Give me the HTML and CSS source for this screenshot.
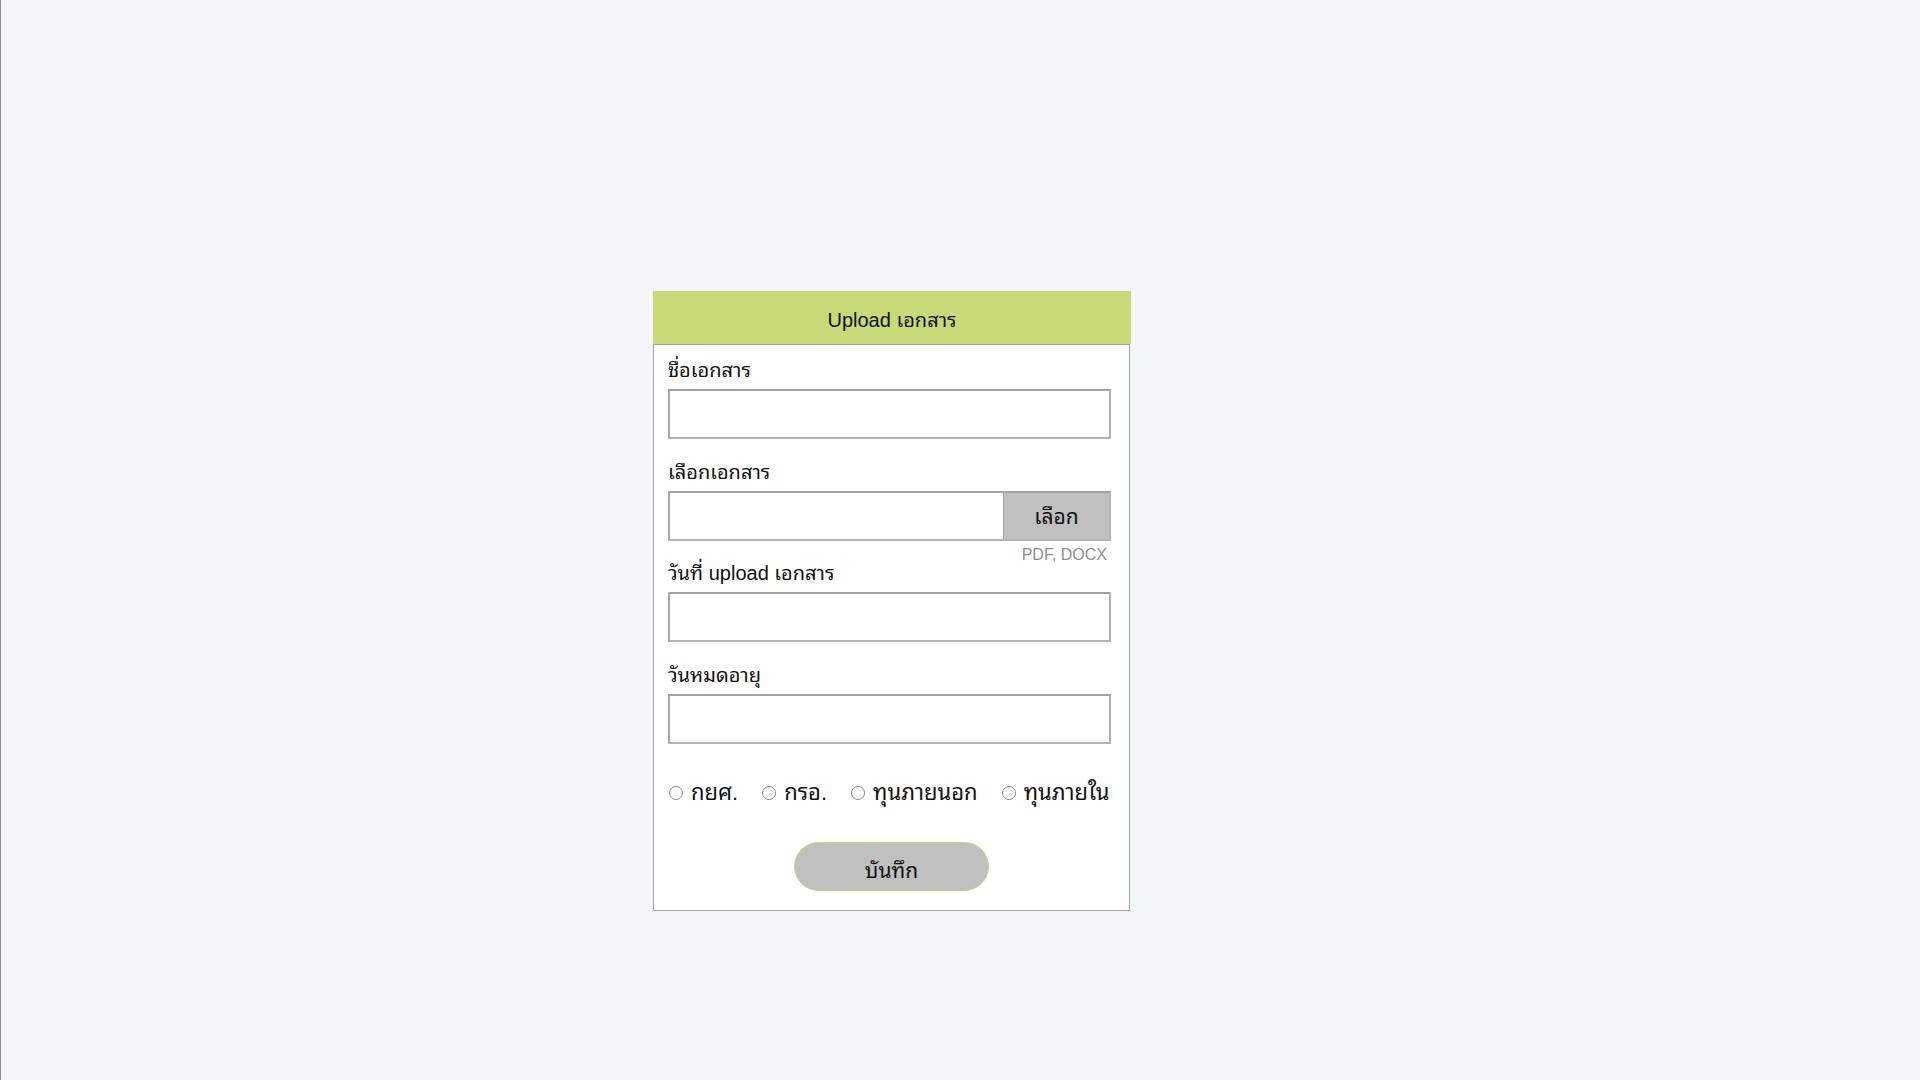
FILE: index.html
```html
<!DOCTYPE html>
<html lang="th">
<head>
<meta charset="utf-8">
<title>Upload เอกสาร</title>
<link rel="stylesheet" href="styles.css">
</head>
<body>
<div class="page">
  <div class="card">
    <div class="card-header">Upload เอกสาร</div>
    <form class="card-body">
      <label class="field-label">ชื่อเอกสาร</label>
      <div class="text-input"></div>

      <label class="field-label gap">เลือกเอกสาร</label>
      <div class="file-row">
        <div class="file-input"></div>
        <div class="file-btn">เลือก</div>
      </div>
      <div class="hint">PDF, DOCX</div>

      <label class="field-label after-hint">วันที่ upload เอกสาร</label>
      <div class="text-input"></div>

      <label class="field-label gap">วันหมดอายุ</label>
      <div class="text-input"></div>

      <div class="radio-row">
        <span class="radio-item"><span class="radio"></span>กยศ.</span>
        <span class="radio-item"><span class="radio"></span>กรอ.</span>
        <span class="radio-item"><span class="radio"></span>ทุนภายนอก</span>
        <span class="radio-item"><span class="radio"></span>ทุนภายใน</span>
      </div>

      <div class="actions">
        <div class="save-btn">บันทึก</div>
      </div>
    </form>
  </div>
</div>
</body>
</html>
```

FILE: styles.css
```css
* { box-sizing: border-box; }

html, body {
  margin: 0;
  padding: 0;
  height: 100%;
}

body {
  background: #f4f7fa;
  border-left: 1px solid #8b9095;
  font-family: "Liberation Sans", "Noto Sans Thai Looped", "Noto Serif Thai", "Loma", "Garuda", "Tlwg Typo", "Noto Sans Thai", "Noto Sans", sans-serif;
  color: #111;
}

.page {
  padding: 291px 0 0 652px;
}

.card {
  width: 477px;
}

.card-header {
  height: 53px;
  width: 478px;
  background: #c8da78;
  display: flex;
  align-items: center;
  justify-content: center;
  font-size: 20px;
  color: #111;
}

.card-body {
  display: flex;
  flex-direction: column;
  background: #ffffff;
  border: 1px solid #a3a3a3;
  padding: 13px 18px 19px 14px;
  margin: 0;
}

.field-label {
  display: block;
  font-size: 20px;
  line-height: 24px;
  height: 24px;
  margin-bottom: 7px;
  color: #111;
}

.field-label.gap { margin-top: 21px; }
.field-label.after-hint { margin-top: -4px; }

.text-input {
  height: 50px;
  width: 100%;
  background: #fff;
  border: 2px solid #b4b4b4;
  border-top-color: #a2a2a2;
  border-left-color: #a8a8a8;
}

.file-row {
  display: flex;
  height: 50px;
  border: 2px solid #b4b4b4;
  border-top-color: #a2a2a2;
  border-left-color: #a8a8a8;
}

.file-input {
  flex: 1;
  background: #fff;
}

.file-btn {
  width: 106px;
  background: #c0c0c0;
  border-left: 1px solid #a8a8a8;
  display: flex;
  align-items: center;
  justify-content: center;
  font-size: 21px;
  color: #111;
  padding-bottom: 3px;
}

.hint {
  text-align: right;
  font-size: 16px;
  line-height: 20px;
  height: 20px;
  margin-top: 4px;
  padding-right: 4px;
  color: #8f8f8f;
}

.radio-row {
  display: flex;
  align-items: center;
  margin-top: 34px;
  height: 30px;
  font-size: 22px;
  line-height: 30px;
  white-space: nowrap;
  margin-right: -30px;
  padding-left: 1px;
}

.radio-item {
  display: inline-flex;
  align-items: center;
  margin-right: 24px;
}

.radio {
  width: 14px;
  height: 14px;
  border-radius: 50%;
  border: 1px solid #8a8a8a;
  background: #fbfbfb;
  margin-right: 8px;
  flex: none;
}

.actions {
  display: flex;
  justify-content: center;
  margin-top: 34px;
}

.save-btn {
  width: 195px;
  height: 49px;
  border-radius: 25px;
  background: #c0c0c0;
  border: 1px solid #c8da78;
  display: flex;
  align-items: center;
  justify-content: center;
  font-size: 21px;
  color: #111;
  padding-top: 3px;
  margin-left: 4px;
}
```
